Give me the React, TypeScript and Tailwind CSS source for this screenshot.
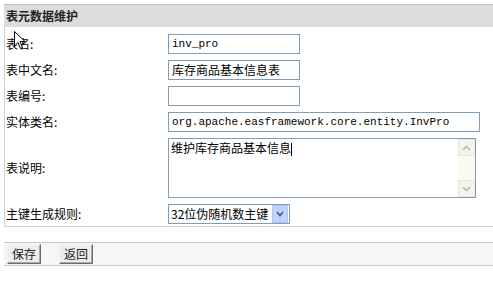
import { ReactNode } from 'react'

const cjk = '"Noto Sans CJK SC", "Liberation Sans", sans-serif'
const mono = '"Liberation Mono", "Noto Sans CJK SC", monospace'

const Row = ({ label, children, h = 'h-[20px]' }: { label: string; children: ReactNode; h?: string }) => (
  <div className={`flex items-center ${h}`}>
    <div className="w-[162px] text-[12px] text-black leading-none">{label}:</div>
    {children}
  </div>
)

const TextBox = ({ value, w = 'w-[132px]', font = cjk, size = 'text-[12px]' }: { value?: string; w?: string; font?: string; size?: string }) => (
  <div
    className={`${w} h-[20px] border border-[#7f9db9] bg-white flex items-center px-[3px] ${size} text-black whitespace-nowrap overflow-hidden`}
    style={{ fontFamily: font }}
  >
    {value}
  </div>
)

const ScrollBtn = ({ up }: { up?: boolean }) => (
  <div className="h-[17px] w-[17px] border border-[#e8e8d8] bg-[#f4f4ea] flex items-center justify-center">
    <svg width="9" height="6" viewBox="0 0 9 6">
      <path d={up ? 'M1 5 L4.5 1.5 L8 5' : 'M1 1 L4.5 4.5 L8 1'} stroke="#b9b9b0" strokeWidth="1.6" fill="none" />
    </svg>
  </div>
)

export default function App() {
  return (
    <div className="w-[493px] h-[301px] bg-white relative overflow-hidden pl-[4px]" style={{ fontFamily: cjk }}>
      {/* header */}
      <div className="mt-[4px] h-[23px] border-t border-[#bdbdbd] bg-[#dcdcdc] flex items-center pl-[2px]">
        <span className="text-[12px] font-bold text-[#222]">表元数据维护</span>
      </div>
      {/* body */}
      <div className="border-l border-b border-[#d0d0d0] pl-[1px] pt-[7px] pb-[2px] flex flex-col gap-[6px]">
        <Row label="表名">
          <TextBox value="inv_pro" font={mono} size="text-[11px]" />
        </Row>
        <Row label="表中文名">
          <TextBox value="库存商品基本信息表" />
        </Row>
        <Row label="表编号">
          <TextBox />
        </Row>
        <Row label="实体类名">
          <TextBox value="org.apache.easframework.core.entity.InvPro" w="w-[312px]" font={mono} size="text-[11px]" />
        </Row>
        <Row label="表说明" h="h-[60px]">
          <div className="w-[308px] h-[60px] border border-[#7f9db9] bg-white flex">
            <div className="flex-1 px-[2px] pt-[1px] text-[12px] text-black leading-[16px]">
              维护库存商品基本信息<span className="inline-block w-px h-[13px] bg-black align-middle" />
            </div>
            <div className="w-[17px] bg-[#fbfbf4] flex flex-col justify-between">
              <ScrollBtn up />
              <ScrollBtn />
            </div>
          </div>
        </Row>
        <Row label="主键生成规则">
          <div className="w-[122px] h-[20px] border border-[#7f9db9] bg-white flex items-center">
            <span className="flex-1 pl-[2px] text-[12px] text-black whitespace-nowrap">32位伪随机数主键</span>
            <div className="w-[16px] h-[18px] mr-px bg-[#c3d3fd] border border-[#b5c8f5] flex items-center justify-center">
              <svg width="8" height="6" viewBox="0 0 8 6">
                <path d="M1 1 L4 4.5 L7 1" stroke="#4d6185" strokeWidth="1.8" fill="none" />
              </svg>
            </div>
          </div>
        </Row>
      </div>
      {/* footer */}
      <div className="mt-[15px] h-[24px] border-t border-b border-[#c8c8c8] bg-[#f6f6f6] flex items-center pl-[3px] gap-[18px]">
        {['保存', '返回'].map((t) => (
          <div
            key={t}
            className="w-[34px] h-[20px] border border-t-[#f2f2f2] border-l-[#f2f2f2] border-r-[#6c6c6c] border-b-[#6c6c6c] bg-[#ececec] flex items-center justify-center text-[12px] text-[#222] shadow-[inset_-1px_-1px_0_#a8a8a8]"
          >
            {t}
          </div>
        ))}
      </div>
      {/* mouse pointer */}
      <svg className="absolute left-[14px] top-[31px]" width="12" height="19" viewBox="0 0 12 19">
        <path d="M0.5 0.5 L0.5 15 L4 11.5 L6.5 17.5 L8.5 16.5 L6 10.5 L11 10.5 Z" fill="white" stroke="black" strokeWidth="1" />
      </svg>
    </div>
  )
}
